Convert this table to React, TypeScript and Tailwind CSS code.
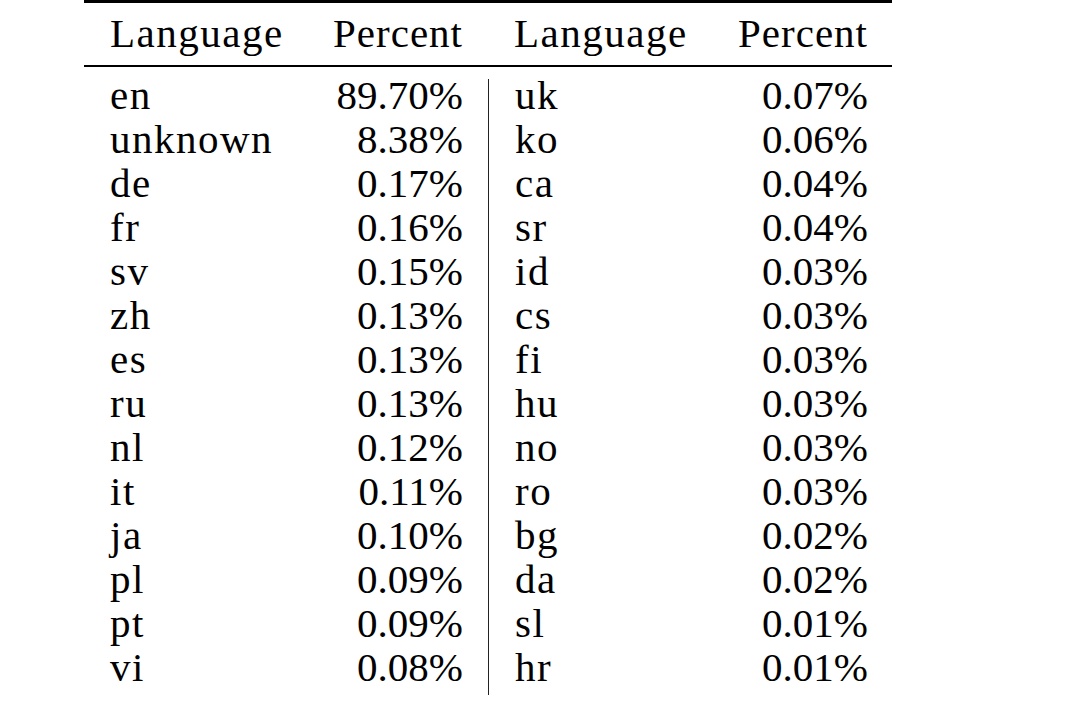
import React from 'react'

type Row = { lang: string; pct: string }

const left: Row[] = [
  { lang: 'en', pct: '89.70%' },
  { lang: 'unknown', pct: '8.38%' },
  { lang: 'de', pct: '0.17%' },
  { lang: 'fr', pct: '0.16%' },
  { lang: 'sv', pct: '0.15%' },
  { lang: 'zh', pct: '0.13%' },
  { lang: 'es', pct: '0.13%' },
  { lang: 'ru', pct: '0.13%' },
  { lang: 'nl', pct: '0.12%' },
  { lang: 'it', pct: '0.11%' },
  { lang: 'ja', pct: '0.10%' },
  { lang: 'pl', pct: '0.09%' },
  { lang: 'pt', pct: '0.09%' },
  { lang: 'vi', pct: '0.08%' }
]

const right: Row[] = [
  { lang: 'uk', pct: '0.07%' },
  { lang: 'ko', pct: '0.06%' },
  { lang: 'ca', pct: '0.04%' },
  { lang: 'sr', pct: '0.04%' },
  { lang: 'id', pct: '0.03%' },
  { lang: 'cs', pct: '0.03%' },
  { lang: 'fi', pct: '0.03%' },
  { lang: 'hu', pct: '0.03%' },
  { lang: 'no', pct: '0.03%' },
  { lang: 'ro', pct: '0.03%' },
  { lang: 'bg', pct: '0.02%' },
  { lang: 'da', pct: '0.02%' },
  { lang: 'sl', pct: '0.01%' },
  { lang: 'hr', pct: '0.01%' }
]

const cols = 'grid grid-cols-[224px_180px_225px_179px]'

export default function App() {
  return (
    <div
      className="w-[1068px] h-[702px] bg-white text-black pl-[84px] overflow-hidden"
      style={{ fontFamily: '"Liberation Serif", "Times New Roman", serif' }}
    >
      <div className="w-[808px] text-[41px]">
        {/* header between top rule and mid rule */}
        <div className={`${cols} border-t-[3px] border-b-2 border-black pt-[14px] pb-[16px] leading-[32px]`}>
          <div className="pl-[26px] tracking-[1.5px]">Language</div>
          <div className="pr-[25px] text-right tracking-[1px]">Percent</div>
          <div className="pl-[26px] tracking-[1.5px]">Language</div>
          <div className="pr-[24px] text-right tracking-[1px]">Percent</div>
        </div>

        {/* body */}
        <div className="pt-[12px]">
          {left.map((l, i) => (
            <div key={l.lang} className={`${cols} leading-[32px]`}>
              <div className="pl-[26px] pb-3 tracking-[1.5px]">{l.lang}</div>
              <div className="pr-[25px] pb-3 text-right">{l.pct}</div>
              <div className="pl-[26px] pb-3 tracking-[1.5px] border-l border-[#222]">{right[i].lang}</div>
              <div className="pr-[24px] pb-3 text-right">{right[i].pct}</div>
            </div>
          ))}
        </div>
      </div>
    </div>
  )
}
